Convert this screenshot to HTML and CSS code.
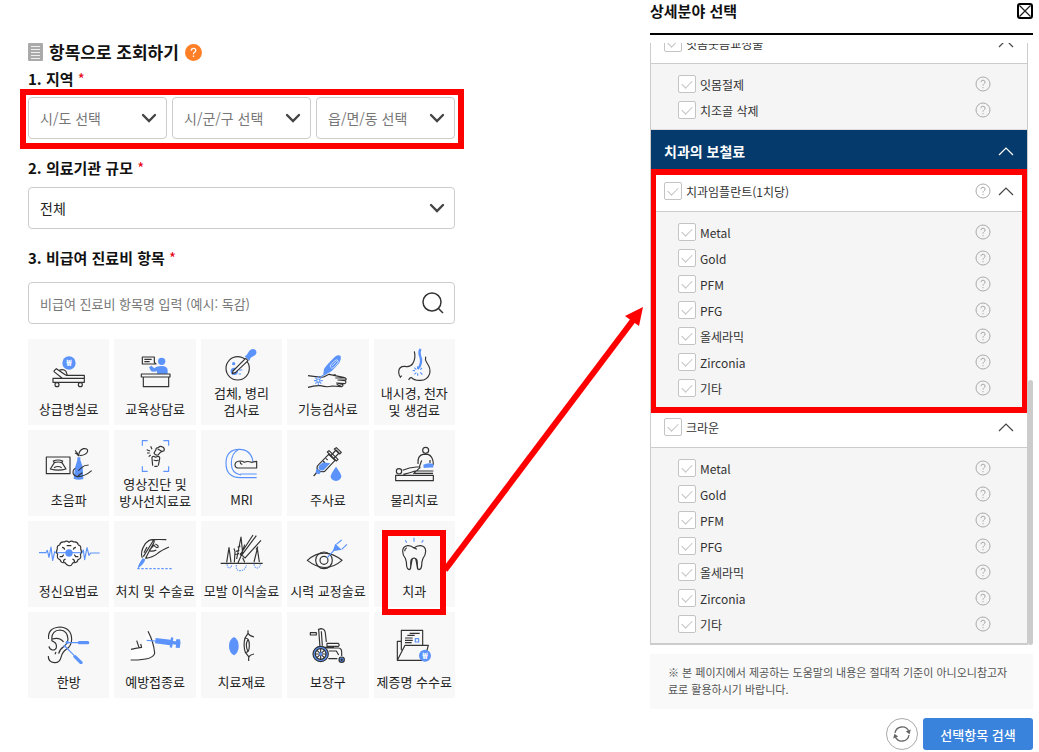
FILE: index.html
```html
<!DOCTYPE html>
<html lang="ko">
<head>
<meta charset="utf-8">
<meta name="viewport" content="width=device-width, initial-scale=1">
<title>비급여 진료비 항목 조회</title>
<link rel="stylesheet" href="styles.css">
</head>
<body>
<svg class="sprite" aria-hidden="true">
  <symbol id="down" viewBox="0 0 16 10"><path d="M2 2l6 6 6-6" fill="none" stroke="#444" stroke-width="2.4" stroke-linecap="round"/></symbol>
  <symbol id="up" viewBox="0 0 16 10"><path d="M1 9l7-7 7 7" fill="none" stroke="currentColor" stroke-width="1.2"/></symbol>
  <symbol id="help" viewBox="0 0 16 16"><circle cx="8" cy="8" r="7" fill="none" stroke="#aaa"/><path d="M5.9 6.2Q6 4.2 8 4.2t2.1 1.9Q10.100 7.200 8.900 7.900 8 8.400 8 9.700M8 11v1.200" fill="none" stroke="#aaa"/></symbol>
</svg>
<main class="page">
  <section class="search">
    <h1 class="title">
      <svg class="title-icon" viewBox="0 0 15 18"><rect width="15" height="18" rx="1" fill="#aaa"/><path d="M3 3.500h9M3 6.500h9M3 9.500h9M3 12.500h9M3 15.500h9" stroke="#eee"/></svg>
      항목으로 조회하기
      <svg class="title-help" viewBox="0 0 17 17"><circle cx="8.500" cy="8.500" r="8.500" fill="#ff7f27"/><path d="M6.200 6.600Q6.300 4.300 8.500 4.300t2.300 2.100Q10.800 7.500 9.500 8.200 8.500 8.800 8.500 10.200M8.500 11.600v1.400" fill="none" stroke="#fff" stroke-width="1.300"/></svg>
    </h1>
    <h2 class="label">1. 지역 <span class="req">*</span></h2>
    <div class="regions">
      <div class="select"><select class="field muted" aria-label="시/도 선택"><option>시/도 선택</option></select><svg><use href="#down"/></svg></div>
      <div class="select"><select class="field muted" aria-label="시/군/구 선택"><option>시/군/구 선택</option></select><svg><use href="#down"/></svg></div>
      <div class="select"><select class="field muted" aria-label="읍/면/동 선택"><option>읍/면/동 선택</option></select><svg><use href="#down"/></svg></div>
    </div>
    <h2 class="label spaced"><label for="size">2. 의료기관 규모 <span class="req">*</span></label></h2>
    <div class="select"><select class="field" id="size"><option>전체</option></select><svg><use href="#down"/></svg></div>
    <h2 class="label spaced"><label for="item">3. 비급여 진료비 항목 <span class="req">*</span></label></h2>
    <div class="find">
      <input class="field" id="item" type="text" placeholder="비급여 진료비 항목명 입력 (예시: 독감)">
      <button class="find-button" aria-label="검색"><svg viewBox="0 0 24 24"><circle cx="11" cy="11" r="9"/><path d="M17.500 17.500L22 22"/></svg></button>
    </div>

    <div class="tiles">
      <button class="tile">
        <svg viewBox="25 12 243 156"><circle class="b" cx="148" cy="84" r="20"/><text class="won" x="148" y="93">₩</text><path d="M100 130h94v12h-94zM139 121h55v9M102 109l8-8 29 20M102 109l25 20M119 106q12-5 20 3l4 12"/><circle cx="112" cy="149" r="6"/><circle cx="182" cy="149" r="6"/></svg>
        <span>상급병실료</span></button>
      <button class="tile">
        <svg viewBox="285 12 243 156"><path d="M367 66h36v16l5 5h-41zM373 73h22M373 80h16"/><circle class="b" cx="425" cy="79" r="11"/><path class="b" d="M387 97l7-5 9 8q7-7 22-7 18 0 18 14v9h-32v-7q-14 3-18-1z"/><path d="M364 117h86v9h-86zM370 126h76v29h-76z"/></svg>
        <span>교육상담료</span></button>
      <button class="tile two">
        <svg viewBox="-117 12 243 135"><circle cx="-7" cy="100" r="35"/><circle class="b" cx="-17" cy="109" r="11"/><circle class="b" cx="-19" cy="86" r="5"/><circle class="b" cx="5" cy="83" r="3"/><path class="bl" d="M-4 105h11M-4 117h7"/><path class="paper" d="M-21 108l38-38 7 7-38 36-9 3z"/><path class="b" d="M14 64l6-4 8-13q8-8 18-3 7 8 0 16l-14 8-4 9z"/></svg>
        <span>검체, 병리<br>검사료</span></button>
      <button class="tile">
        <svg viewBox="144 12 243 156"><path class="b" d="M252 124l3-21q3-9 33-38 10-7 17-2 3 9-4 20-22 27-33 31z"/><path class="wl" d="M275 90l12-13q7-5 10 0 2 4-2 9l-11 12q-8 4-10-2zM279 93l14-14"/><path d="M207 122q29 5 47 4l16-8 43 9q11 3 8 8h-24l21 2q6 5-1 9l-24-2 18 4q3 5-4 7l-28-2q-14 5-35-1-18-1-37 5M271 118q11 4 19 1M289 129h31M293 148l16 7"/><g class="bl"><circle cx="238" cy="137" r="5"/><path d="M238 124v5M238 145v6M225 137h6M245 137h6M229 128l4 4M243 142l4 4M229 146l4-4M243 132l8-12"/></g></svg>
        <span>기능검사료</span></button>
      <button class="tile two">
        <svg viewBox="402 12 243 135"><path d="M523 49q5 21-5 37-7 11-23 8-18-1-19 16 0 11 6 18M557 65q-3 9 4 19 12 17 8 32-7 22-32 20-15 0-23-9M480 128l5-6M514 127q-6 1-8 8"/><path class="bt" d="M542 42q-6 7-2 20 5 11 3 20-2 12-10 20"/><path class="bl" d="M533 94v8M523 98l6 6M518 107h7M523 118l6-5M533 115v7M541 112l6 7M541 104l5-5"/></svg>
        <span>내시경, 천자<br>및 생검료</span></button>

      <button class="tile">
        <svg viewBox="25 285 243 156"><path d="M80 366h71v50H80zM101 378q14-6 28 0l-3 5q-11-4-22 0zM104 383l-12 19q24 7 47 0l-12-19M103 398q12-7 23 0M166 346q8 7 9 16M166 354l10 5M177 364q0-18 14-23 13-2 13 7-2 12-24 14"/><path class="b" d="M173 367h9v8l7 20 2 37q-15 5-29-1l4-33 7-23z"/><path d="M207 390q-13 0-21 8l-10 9M216 407q-21 18-42 18-14-3-14-14 0-8 7-11M188 413l-13 9"/></svg>
        <span>초음파</span></button>
      <button class="tile two">
        <svg viewBox="285 285 243 135"><path class="bl" d="M367 332v-15h16M430 317h16v15M367 394v15h16M446 394v15h-16"/><path d="M398 392l-2-22q-1-6 5-6l6 3 7-3q6 1 5 7l-4 21M403 394h10M401 375q8 4 14 0M402 354l6-10q-1-6 7-6 5-6 13-2 7 4 4 11l-11 5-6 7q-9 4-13-5zM396 343l-4-9M390 348l-10-4M389 354h-8M392 360l-6 5M413 342l15 8"/></svg>
        <span>영상진단 및<br>방사선치료료</span></button>
      <button class="tile">
        <svg viewBox="-117 285 243 156"><path class="bl" d="M1 428q-43 0-43-43 0-42 40-42 34 0 41 36M3 420q-29-4-29-35 0-32 24-42M1 428h49M1 417h49"/><path d="M50 379v20H0q-15 1-15-9 0-11 15-12 7 0 13 4 10-5 21 0zM7 388q-7-1-6-7"/></svg>
        <span>MRI</span></button>
      <button class="tile">
        <svg viewBox="144 285 243 156"><path class="paper" d="M239 389l30-31 19 18-31 33q-12 4-21-5-5-8 3-15zM275 363l16-18 9 9-16 17"/><path d="M265 351l27 27 5-5-27-26zM286 342l6-4 15 14-5 5z"/><path class="b" d="M242 390l10-8 22 3-20 21q-10 3-15-5-2-6 3-11z"/><path class="b" d="M232 400l14 11-5 7-11-3z"/><path d="M232 414l-8 9M252 378l6 5M260 370l6 5"/><path class="b" d="M291 395q16 22 16 29-2 13-16 14-15-1-16-14 1-8 16-29z"/></svg>
        <span>주사료</span></button>
      <button class="tile">
        <svg viewBox="402 285 243 156"><circle cx="557" cy="346" r="9"/><path d="M534 387q-2-26 15-29h15q15 5 16 29l-5 10M545 376l-7 20M570 375v9"/><path class="b" d="M550 389q14-8 30-2v10l-29 2z"/><circle cx="477" cy="409" r="8"/><path d="M467 421h113v16H467zM488 406q20-9 41-10h12M490 418q21-4 35-10h55M541 397l-20 18h58"/></svg>
        <span>물리치료</span></button>

      <button class="tile">
        <svg viewBox="25 12 243 156"><path class="bl" d="M58 107h21l4-7 5 21 6-31 5 40 6-26 4 3h78l4-8 4 29 7-36 6 23 5-7h27"/><path class="paper" d="M148 76q-7-7-14-1-12-2-14 9-9 2-7 11-5 10 1 17-4 13 7 16 3 11 15 9 6 10 12 9 6 2 12-9 13 2 15-9 12-3 7-16 6-7 1-17 2-9-7-11-2-11-14-9-7-6-14 1z"/><path d="M127 91q7 0 8 7M120 119h8l4-6M132 136q-2-8 6-10M169 91q-7 0-8 7M176 119h-8l-4-6M164 136q2-8-6-10M141 86h14"/><circle class="b" cx="148" cy="108" r="11"/><path class="bl" d="M113 107h71"/></svg>
        <span>정신요법료</span></button>
      <button class="tile">
        <svg viewBox="285 12 243 156"><path class="b" d="M368 124l8 3q-3 14-23 28 1-12 15-31z"/><path class="bl" d="M352 155h108" stroke-dasharray="7 5"/><path d="M367 122q-8-16 9-42 12-14 25-12 15-1 38 0M397 68q9 2 4 10l-24 45M370 119l31-50M381 90l-9 17M387 101l15-17q5 10 12 7 3-5-8-10M376 124q22-2 36-14 11-10 35-20M390 102q9 2 19-3"/></svg>
        <span>처치 및 수술료</span></button>
      <button class="tile">
        <svg viewBox="-117 12 243 156"><path d="M-58 139H68M-40 136l7-44 6 44M-17 136l2-32-3-10M-15 112l12-2M-10 126L3 60l5 48M-6 137l8-18 12-36M0 114l39-60M4 116l45-60M14 124l49-54M-12 103l10-3M0 109l14 13M42 135l10-40 6 40M48 97l6-8M8 122l6 14M-7 91l8-4"/><path class="bl" d="M-39 142q2 11 7 11t8-10M-11 144q-2 16 10 17 17 0 20-17M42 142q3 12 9 11 8 0 10-11" stroke-dasharray="4 3"/></svg>
        <span>모발 이식술료</span></button>
      <button class="tile">
        <svg viewBox="144 12 243 156"><path d="M205 130q49-43 104 0-50 43-104 0z"/><circle cx="255" cy="130" r="25"/><circle cx="255" cy="130" r="12"/><path class="bl" d="M264 123l20-22M292 82l16-13M308 97l16-15"/><path class="b" d="M281 103l8-23 19 18z"/></svg>
        <span>시력 교정술료</span></button>
      <button class="tile picked">
        <svg viewBox="402 12 243 156"><path class="bl" d="M496 70l4 7M522 62v12M550 69l-5 8"/><path d="M522 93q-9-8-19-7-15 2-15 17 0 12 8 21 4 10 4 24 2 9 7 10 6-1 5-17-1-18 10-18t10 18q0 16 5 17 7-1 8-12 0-12 4-22 8-9 8-21 0-15-15-17-11-1-20 7l9 4M500 92q-6 3-6 11M511 157l4-23q1-11 7-11t7 11l4 23"/></svg>
        <span>치과</span></button>

      <button class="tile">
        <svg viewBox="25 285 243 156"><path d="M87 366q-4-33 33-36 35 2 36 36 0 21-16 31-12 8-16 24-4 17-20 16-19-2-18-20M96 365q1-25 25-26 23 2 24 27-2 16-14 24-11 7-14 20M97 366q23-7 35 9M97 366q-3 6 5 8 10 5 8 18-2 8-12 7-9-3-10-11M109 405l-3 7"/><circle class="b" cx="143" cy="376" r="5"/><path class="bl" d="M143 377h32M135 387l29 29"/><circle class="b" cx="135" cy="387" r="4"/><path class="handle" d="M179 377h25M166 419l18 18"/></svg>
        <span>한방</span></button>
      <button class="tile">
        <svg viewBox="285 285 243 156"><path class="skin" d="M384 343q17 33 20 65-3 14-27 20l-45 1v-34l31-4z"/><path d="M384 343q17 33 20 65-3 22-72 21M333 397q19-5 32-6l-3-10M350 371l7 20"/><path class="bl" d="M380 370l27 2"/><path class="b" d="M407 363l45 5 1-7 7 1-1 10 9 1 1-6h11q4 12-1 26l-12-1 1-9-10-1-2 10-7-1 1-6-45-6z"/></svg>
        <span>예방접종료</span></button>
      <button class="tile">
        <svg viewBox="-117 285 243 156"><path class="b" d="M-18 360q-15 8-15 27 0 20 15 28 14-8 14-28 0-19-14-27z"/><path d="M24 340v8q2 7 18 12M26 432v-10q2-8 16-11M24 349l-9 14q-6 22 1 43l10 13M15 364q13-3 13 21 0 25-13 20M23 369q-8 16 0 32"/></svg>
        <span>치료재료</span></button>
      <button class="tile">
        <svg viewBox="144 285 243 156"><path d="M214 347h18v7h-18zM237 338l9-3q12 1 13 13l3 27M239 337l4 54M247 343l3 43M264 379h34q5 5 0 9h-34zM250 391h35M264 393h34q11 1 10 14v10M270 402h22l7 12M268 425h27"/><circle class="bf" cx="245" cy="411" r="23"/><circle cx="245" cy="411" r="16" class="paper"/><path d="M245 395v32M229 411h32M234 400l22 22M256 400l-22 22"/><circle class="b" cx="245" cy="411" r="5"/><circle class="bf" cx="308" cy="428" r="8"/><circle cx="308" cy="428" r="2"/></svg>
        <span>보장구</span></button>
      <button class="tile">
        <svg viewBox="402 285 243 156"><path d="M484 400v-60h64v43M484 373h-12v57h75M472 430l23-45h70l-12 44M509 349h30M502 355h22M495 363h23M495 370h23M495 377h20"/><path class="bl" d="M526 365h10v10h-10z"/><circle class="b" cx="555" cy="416" r="18"/><text class="won" x="555" y="425">₩</text></svg>
        <span>제증명 수수료</span></button>
    </div>
  </section>

  <div class="link">
    <svg viewBox="443 300 204 280" preserveAspectRatio="none" aria-hidden="true"><path d="M445 570L634 319" stroke="#f00" stroke-width="6"/><path d="M643 307l-18 9 14 10z" fill="#f00"/></svg>
  </div>

  <section class="detail">
    <header class="detail-head">
      <h2 class="detail-title">상세분야 선택</h2>
      <button class="close" aria-label="닫기"><svg viewBox="0 0 16 16"><rect x="1" y="1" width="14" height="14" rx="2" fill="none" stroke="#000" stroke-width="2"/><path d="M2.500 2.500l11 11M13.500 2.500l-11 11" stroke="#222" stroke-width="1.300"/></svg></button>
    </header>
    <div class="scroll">
      <div class="view">
        <div class="group">
          <div class="group-head"><label><input type="checkbox">잇몸웃음교정술</label><button class="fold" aria-label="접기"><svg><use href="#up"/></svg></button></div>
          <ul class="options last">
            <li><label><input type="checkbox">잇몸절제</label><button class="help" aria-label="도움말"><svg><use href="#help"/></svg></button></li>
            <li><label><input type="checkbox">치조골 삭제</label><button class="help" aria-label="도움말"><svg><use href="#help"/></svg></button></li>
          </ul>
        </div>
        <div class="band"><h3>치과의 보철료</h3><button class="fold" aria-label="접기"><svg><use href="#up"/></svg></button></div>
        <div class="group marked">
          <div class="group-head"><label><input type="checkbox">치과임플란트(1치당)</label><button class="help" aria-label="도움말"><svg><use href="#help"/></svg></button><button class="fold" aria-label="접기"><svg><use href="#up"/></svg></button></div>
          <ul class="options">
            <li><label><input type="checkbox">Metal</label><button class="help" aria-label="도움말"><svg><use href="#help"/></svg></button></li>
            <li><label><input type="checkbox">Gold</label><button class="help" aria-label="도움말"><svg><use href="#help"/></svg></button></li>
            <li><label><input type="checkbox">PFM</label><button class="help" aria-label="도움말"><svg><use href="#help"/></svg></button></li>
            <li><label><input type="checkbox">PFG</label><button class="help" aria-label="도움말"><svg><use href="#help"/></svg></button></li>
            <li><label><input type="checkbox">올세라믹</label><button class="help" aria-label="도움말"><svg><use href="#help"/></svg></button></li>
            <li><label><input type="checkbox">Zirconia</label><button class="help" aria-label="도움말"><svg><use href="#help"/></svg></button></li>
            <li><label><input type="checkbox">기타</label><button class="help" aria-label="도움말"><svg><use href="#help"/></svg></button></li>
          </ul>
        </div>
        <div class="group">
          <div class="group-head"><label><input type="checkbox">크라운</label><button class="fold" aria-label="접기"><svg><use href="#up"/></svg></button></div>
          <ul class="options">
            <li><label><input type="checkbox">Metal</label><button class="help" aria-label="도움말"><svg><use href="#help"/></svg></button></li>
            <li><label><input type="checkbox">Gold</label><button class="help" aria-label="도움말"><svg><use href="#help"/></svg></button></li>
            <li><label><input type="checkbox">PFM</label><button class="help" aria-label="도움말"><svg><use href="#help"/></svg></button></li>
            <li><label><input type="checkbox">PFG</label><button class="help" aria-label="도움말"><svg><use href="#help"/></svg></button></li>
            <li><label><input type="checkbox">올세라믹</label><button class="help" aria-label="도움말"><svg><use href="#help"/></svg></button></li>
            <li><label><input type="checkbox">Zirconia</label><button class="help" aria-label="도움말"><svg><use href="#help"/></svg></button></li>
            <li><label><input type="checkbox">기타</label><button class="help" aria-label="도움말"><svg><use href="#help"/></svg></button></li>
          </ul>
        </div>
      </div>
      <div class="bar"></div>
    </div>
    <p class="notice">※ 본 페이지에서 제공하는 도움말의 내용은 절대적 기준이 아니오니참고자료로 활용하시기 바랍니다.</p>
    <div class="actions">
      <button class="reset" aria-label="초기화"><svg viewBox="0 0 20 20"><path d="M3 9a7.200 7.200 0 0 1 13.800-1.500M17 11a7.200 7.200 0 0 1-13.800 1.500" fill="none" stroke="#666" stroke-width="1.300"/><path d="M18.800 5.500l-1.200 4.700-3.800-2.600zM1.200 14.500l1.200-4.700 3.800 2.600z" fill="#666"/></svg></button>
      <button class="submit">선택항목 검색</button>
    </div>
  </section>
</main>
</body>
</html>
```
FILE: styles.css
```css
* { box-sizing: border-box; }

body {
  margin: 0;
  background: #fff;
  color: #222;
  font-family: "Noto Sans CJK KR", "Noto Sans", sans-serif;
  font-size: 13px;
}

h1, h2, h3, ul, p { margin: 0; padding: 0; }
ul { list-style: none; }
svg { display: block; flex: none; }
button, select, input { font: inherit; color: inherit; }
button { margin: 0; padding: 0; border: 0; background: none; cursor: pointer; }

.sprite { position: absolute; width: 0; height: 0; }

.page {
  display: grid;
  grid-template-columns: 427fr 195fr 383fr;
  padding: 0 6px 0 28px;
}

/* search form */
.search { min-width: 0; padding-top: 40px; }

.title {
  display: flex;
  align-items: center;
  gap: 6px;
  margin-bottom: 4px;
  font-size: 17px;
  line-height: 24px;
  color: #111;
}
.title-icon { width: 15px; height: 18px; }
.title-help { width: 17px; height: 17px; }

.label {
  margin-bottom: 7px;
  font-size: 15px;
  line-height: 22px;
  color: #111;
}
.label.spaced { margin: 18px 0 8px; }
.req { color: #e60012; font-weight: 400; }

.regions {
  position: relative;
  display: grid;
  grid-template-columns: repeat(3, 1fr);
  gap: 5px;
}
.regions::after {
  content: "";
  position: absolute;
  inset: -8px -9px -10px -8px;
  border: 6px solid #f00;
  pointer-events: none;
}

.field {
  width: 100%;
  height: 42px;
  padding: 0 11px;
  border: 1px solid #ccc;
  border-radius: 4px;
  background: #fff;
  font-size: 14px;
  appearance: none;
}
.field::placeholder { color: #777; font-size: 13px; opacity: 1; }
.muted { color: #777; }

.select { display: grid; align-items: center; }
.select > * { grid-area: 1 / 1; }
.select svg {
  justify-self: end;
  width: 16px;
  height: 10px;
  margin-right: 10px;
  pointer-events: none;
}

.find { display: grid; align-items: center; margin-top: 13px; }
.find > * { grid-area: 1 / 1; }
.find-button { justify-self: end; margin-right: 10px; }
.find-button svg {
  width: 24px;
  height: 24px;
  fill: none;
  stroke: #333;
  stroke-width: 1.5;
}

.tiles {
  display: grid;
  grid-template-columns: repeat(5, 1fr);
  gap: 5px;
  margin-top: 15px;
}
.tile {
  position: relative;
  display: flex;
  flex-direction: column;
  align-items: center;
  justify-content: space-between;
  min-width: 0;
  min-height: 86px;
  padding-bottom: 8px;
  background: #f8f8f8;
  line-height: 17px;
  white-space: nowrap;
}
.tile svg {
  width: 81px;
  height: 52px;
  fill: none;
  stroke: #333;
  stroke-width: 3.5;
  stroke-linejoin: round;
}
.tile.two { padding-bottom: 7px; }
.tile.two svg { height: 45px; }
.tile .b { fill: #5b93fb; stroke: none; }
.tile .bl { stroke: #5b93fb; }
.tile .bt { stroke: #5b93fb; stroke-width: 7; }
.tile .handle { stroke: #5b93fb; stroke-width: 10; stroke-linecap: round; }
.tile .bf { fill: #5b93fb; }
.tile .wl { stroke: #fff; stroke-width: 2; }
.tile .paper { fill: #fff; }
.tile .skin { fill: #fff; stroke: none; }
.tile .won {
  fill: #fff;
  stroke: none;
  font-size: 26px;
  font-weight: 700;
  text-anchor: middle;
}
.tile.picked { z-index: 1; }
.tile.picked::after {
  content: "";
  position: absolute;
  inset: 9px 9px -8px 8px;
  border: 6px solid #f00;
  pointer-events: none;
}

/* pointer from the picked tile to its detail list */
.link { position: relative; }
.link svg {
  position: absolute;
  top: 300px;
  left: -12px;
  z-index: 1;
  width: calc(100% + 9px);
  height: 280px;
  pointer-events: none;
}

/* detail panel */
.detail { min-width: 0; }
.detail-head {
  display: flex;
  justify-content: space-between;
  align-items: flex-start;
  padding-bottom: 11px;
  border-bottom: 2px solid #000;
}
.detail-title { font-size: 15px; line-height: 22px; color: #111; }
.close { margin-top: 3px; }
.close svg { width: 16px; height: 16px; }

.scroll { display: flex; height: 602px; margin-top: 8px; }
.view {
  flex: 1;
  display: flex;
  flex-direction: column;
  justify-content: flex-end;
  overflow: hidden;
  border: solid #ccc;
  border-width: 0 1px 2px;
}
.bar {
  align-self: flex-end;
  width: 5px;
  height: 44%;
  border-radius: 3px;
  background: #ccc;
}

.group { flex: none; }
.group-head, .band {
  display: flex;
  flex: none;
  align-items: center;
  gap: 7px;
  height: 41px;
  padding: 0 13px;
}
.group-head { border-bottom: 1px solid #ccc; background: #fff; }
.band { background: #053a6d; color: #fff; }
.band h3 { margin-right: auto; font-size: 14px; }

.marked { position: relative; }
.marked::after {
  content: "";
  position: absolute;
  inset: -2px -1px -6px;
  z-index: 1;
  border: 6px solid #f00;
  pointer-events: none;
}

.options { padding: 7px 0 6px; background: #f5f5f5; }
.options.last { border-bottom: 1px solid #ddd; }
.options li {
  display: flex;
  align-items: center;
  height: 26px;
  padding: 0 36px 0 27px;
}

.detail label {
  display: flex;
  align-items: center;
  gap: 4px;
  margin-right: auto;
  color: #333;
  font-size: 12px;
}
.detail input {
  display: grid;
  place-items: center;
  width: 18px;
  height: 18px;
  margin: 0;
  border: 1px solid #c4c4c4;
  border-radius: 2px;
  background: #fff;
  appearance: none;
}
.detail input::before {
  content: "";
  width: 9px;
  height: 5px;
  margin-bottom: 3px;
  border: solid #c4c4c4;
  border-width: 0 0 1px 1px;
  transform: rotate(-45deg);
}
.help svg { width: 16px; height: 16px; }
.fold svg { width: 16px; height: 10px; }
.group-head .fold { color: #444; }

.notice {
  margin-top: 9px;
  padding: 10px 20px 11px 18px;
  background: #f9f9f9;
  color: #555;
  font-size: 11px;
  line-height: 17px;
}

.actions {
  display: flex;
  justify-content: flex-end;
  gap: 5px;
  margin-top: 9px;
}
.reset {
  display: grid;
  place-items: center;
  width: 32px;
  height: 32px;
  border: 1px solid #aaa;
  border-radius: 50%;
}
.reset svg { width: 20px; height: 20px; }
.submit {
  width: 110px;
  height: 32px;
  border-radius: 3px;
  background: #3a83dc;
  color: #fff;
  font-weight: 500;
}
```
